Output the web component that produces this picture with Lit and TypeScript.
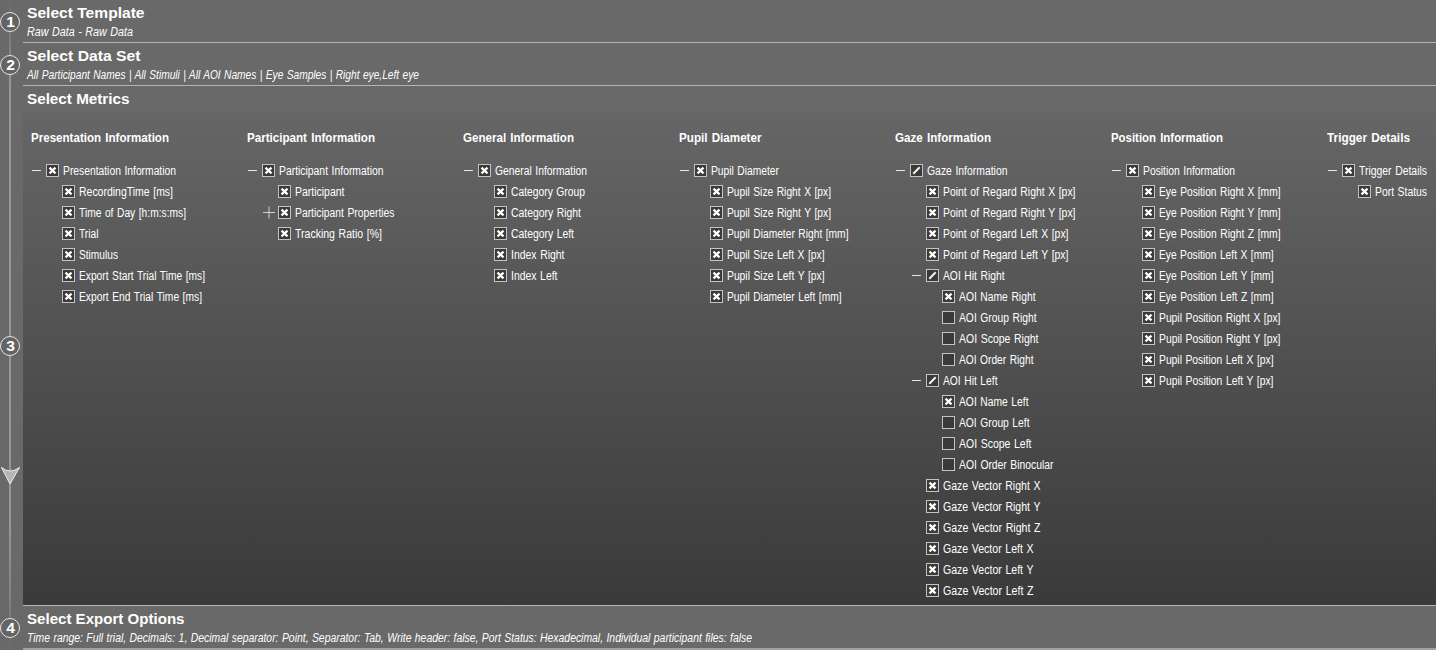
import { LitElement, html, css, svg, nothing } from "lit";
import { customElement, property } from "lit/decorators.js";

type Mark = "x" | "part" | "none";
interface Node {
  label: string;
  width: number;
  mark?: Mark;
  toggle?: "minus" | "plus";
  children?: Node[];
}
interface Column {
  title: string;
  width: number;
  root: Node;
}

const n = (label: string, width: number, mark: Mark = "x"): Node => ({ label, width, mark });
const group = (label: string, width: number, children: Node[], mark: Mark = "x"): Node => ({
  label, width, mark, toggle: "minus", children,
});

const COLUMNS: Column[] = [
  {
    title: "Presentation Information", width: 138,
    root: group("Presentation Information", 114, [
      n("RecordingTime [ms]", 95),
      n("Time of Day [h:m:s:ms]", 108),
      n("Trial", 20.5),
      n("Stimulus", 40),
      n("Export Start Trial Time [ms]", 127),
      n("Export End Trial Time [ms]", 124),
    ]),
  },
  {
    title: "Participant Information", width: 128,
    root: group("Participant Information", 105.5, [
      n("Participant", 50.5),
      { label: "Participant Properties", width: 100.5, toggle: "plus" },
      n("Tracking Ratio [%]", 88),
    ]),
  },
  {
    title: "General Information", width: 111,
    root: group("General Information", 93, [
      n("Category Group", 75),
      n("Category Right", 71),
      n("Category Left", 64),
      n("Index Right", 54.5),
      n("Index Left", 47.5),
    ]),
  },
  {
    title: "Pupil Diameter", width: 82.5,
    root: group("Pupil Diameter", 69, [
      n("Pupil Size Right X [px]", 105),
      n("Pupil Size Right Y [px]", 105),
      n("Pupil Diameter Right [mm]", 122.5),
      n("Pupil Size Left X [px]", 98.5),
      n("Pupil Size Left Y [px]", 98.5),
      n("Pupil Diameter Left [mm]", 115.5),
    ]),
  },
  {
    title: "Gaze Information", width: 96,
    root: group("Gaze Information", 81.5, [
      n("Point of Regard Right X [px]", 133.5),
      n("Point of Regard Right Y [px]", 133.5),
      n("Point of Regard Left X [px]", 126.5),
      n("Point of Regard Left Y [px]", 126.5),
      group("AOI Hit Right", 62.5, [
        n("AOI Name Right", 77.5),
        n("AOI Group Right", 78.5, "none"),
        n("AOI Scope Right", 80.5, "none"),
        n("AOI Order Right", 75.5, "none"),
      ], "part"),
      group("AOI Hit Left", 55.5, [
        n("AOI Name Left", 70.5),
        n("AOI Group Left", 71.5, "none"),
        n("AOI Scope Left", 73.5, "none"),
        n("AOI Order Binocular", 95.5, "none"),
      ], "part"),
      n("Gaze Vector Right X", 98.5),
      n("Gaze Vector Right Y", 98.5),
      n("Gaze Vector Right Z", 98.5),
      n("Gaze Vector Left X", 91.5),
      n("Gaze Vector Left Y", 91.5),
      n("Gaze Vector Left Z", 91.5),
    ], "part"),
  },
  {
    title: "Position Information", width: 112,
    root: group("Position Information", 93, [
      n("Eye Position Right X [mm]", 122.5),
      n("Eye Position Right Y [mm]", 122.5),
      n("Eye Position Right Z [mm]", 122.5),
      n("Eye Position Left X [mm]", 115.5),
      n("Eye Position Left Y [mm]", 115.5),
      n("Eye Position Left Z [mm]", 115.5),
      n("Pupil Position Right X [px]", 122.5),
      n("Pupil Position Right Y [px]", 122.5),
      n("Pupil Position Left X [px]", 115.5),
      n("Pupil Position Left Y [px]", 115.5),
    ]),
  },
  {
    title: "Trigger Details", width: 83,
    root: group("Trigger Details", 69, [n("Port Status", 53)]),
  },
];

/* A single line of text, condensed or widened to its given width. */
@customElement("fit-text")
export class FitText extends LitElement {
  static styles = css`
    :host { display: block; white-space: pre; }
    .line { display: inline-block; transform-origin: 0 50%; }
  `;
  @property({ type: Number }) width = 0;
  @property() text = "";
  firstUpdated() {
    const line = this.renderRoot.querySelector<HTMLElement>(".line")!;
    const natural = line.getBoundingClientRect().width;
    if (natural > 0 && this.width > 0) line.style.transform = `scaleX(${this.width / natural})`;
  }
  render() {
    return html`<span class="line">${this.text}</span>`;
  }
}

@customElement("metric-node")
export class MetricNode extends LitElement {
  static styles = css`
    :host { display: block; }
    .row { display: flex; align-items: center; height: 21px; }
    .toggle { display: block; flex: none; width: 16px; height: 13px; }
    .box { display: block; flex: none; width: 13px; height: 13px; margin-right: 4px; }
    .label { width: 0; height: 21px; font-size: 12px; line-height: 23px; word-spacing: 0.8px; color: #fff; }
    .kids { padding-left: 16px; }
  `;
  @property({ attribute: false }) node!: Node;
  render() {
    const { label, width, mark = "x", toggle, children } = this.node;
    return html`
      <div class="row">
        <svg class="toggle" viewBox="0 0 16 13">
          ${toggle === "minus" ? svg`<path d="M2 6.5H11" stroke="#e4e4e4"/>` : nothing}
          ${toggle === "plus" ? svg`<path d="M1 6.5H13M7 .5V12.5" stroke="#d0d0d0" fill="none"/>` : nothing}
        </svg>
        <svg class="box" viewBox="0 0 13 13">
          <rect x=".5" y=".5" width="12" height="12" fill="#3a3a3a" stroke="#c4c4c4"/>
          ${mark === "x" ? svg`<path d="M3.5 3.6L9.5 9.4M9.5 3.6L3.5 9.4" stroke="#fff" stroke-width="2.2"/>` : nothing}
          ${mark === "part" ? svg`<path d="M3.3 9.7L9.7 3.3" stroke="#f4f4f4" stroke-width="2"/>` : nothing}
        </svg>
        <fit-text class="label" .text=${label} .width=${width - 1}></fit-text>
      </div>
      ${children
        ? html`<div class="kids">${children.map((c) => html`<metric-node .node=${c}></metric-node>`)}</div>`
        : nothing}
    `;
  }
}

@customElement("step-badge")
export class StepBadge extends LitElement {
  static styles = css`
    :host {
      display: block; box-sizing: border-box; width: 20px; height: 20px;
      border: 1px solid #e6e6e6; border-radius: 50%; background: #646464;
      color: #fff; font-weight: bold; font-size: 14px; line-height: 19px; text-align: center;
    }
    .digit { display: block; transform: scaleX(1.12); padding-left: 1px; }
  `;
  @property() value = "";
  render() {
    return html`<span class="digit">${this.value}</span>`;
  }
}

@customElement("app-root")
export class AppRoot extends LitElement {
  static styles = css`
    :host {
      display: flex; flex-direction: column; box-sizing: border-box;
      width: 1436px; height: 650px; overflow: hidden;
      background: #696969; color: #fff;
      font-family: "Liberation Sans", Arial, sans-serif;
    }
    .step { display: grid; grid-template-columns: 23px 1fr; height: 43px; flex: none; }
    .step.open { height: 520px; }
    .step.last { height: 44px; }
    .rail {
      position: relative; display: flex; align-items: center;
      background: linear-gradient(#808080, #808080) 9px 0 / 2px 100% no-repeat;
    }
    .first .rail { background-image: linear-gradient(#696969, #808080); }
    .second .rail { background-image: linear-gradient(#808080, #969696); }
    .open .rail { background-image: linear-gradient(#969696, #969696 85%, #808080); }
    .last .rail { background-image: linear-gradient(#808080, #696969); }
    .arrow { position: absolute; left: 0; top: 380px; width: 21px; height: 20px; }
    .body { border-bottom: 1px solid #b4b4b4; min-width: 0; }
    .open .body { display: flex; flex-direction: column; }
    .last .body { border-bottom: 2px solid #a0a0a0; }
    .title {
      font-weight: bold; font-size: 14px; line-height: 18px;
      padding: 4px 0 0 4px; height: 18px;
    }
    .sub { font-style: italic; font-size: 12px; line-height: 16px; padding: 2px 0 0 4px; word-spacing: 0.6px; }
    .panel {
      flex: 1; margin-top: 4px; display: grid;
      grid-template-columns: repeat(6, 216px) 1fr;
      padding: 18px 0 0 7px; align-items: start;
      background: linear-gradient(#666, #3a3a3a);
    }
    .heading { font-weight: bold; font-size: 12px; line-height: 16px; padding: 0 0 14px 1px; word-spacing: 1px; }
  `;

  private step(value: string, title: string, width: number, sub: string, subWidth: number, cls: string) {
    return html`
      <section class="step ${cls}">
        <div class="rail"><step-badge .value=${value}></step-badge></div>
        <div class="body">
          <fit-text class="title" .text=${title} .width=${width}></fit-text>
          <fit-text class="sub" .text=${sub} .width=${subWidth}></fit-text>
        </div>
      </section>
    `;
  }

  render() {
    return html`
      ${this.step("1", "Select Template", 117.5, "Raw Data - Raw Data", 106, "first")}
      ${this.step("2", "Select Data Set", 113.5, "All Participant Names | All Stimuli | All AOI Names | Eye Samples | Right eye,Left eye", 392, "second")}
      <section class="step open">
        <div class="rail">
          <step-badge .value=${"3"}></step-badge>
          <svg class="arrow" viewBox="0 0 21 20">
            <path d="M1.5 1.5Q10 8.5 19.5 1.5L10 18Z" fill="#b5b5b5" stroke="#ededed"/>
          </svg>
        </div>
        <div class="body">
          <fit-text class="title" .text=${"Select Metrics"} .width=${102.5}></fit-text>
          <div class="panel">
            ${COLUMNS.map((c) => html`
              <div class="column">
                <fit-text class="heading" .text=${c.title} .width=${c.width}></fit-text>
                <metric-node .node=${c.root}></metric-node>
              </div>
            `)}
          </div>
        </div>
      </section>
      ${this.step("4", "Select Export Options", 157.5, "Time range: Full trial, Decimals: 1, Decimal separator: Point, Separator: Tab, Write header: false, Port Status: Hexadecimal, Individual participant files: false", 725, "last")}
    `;
  }
}
